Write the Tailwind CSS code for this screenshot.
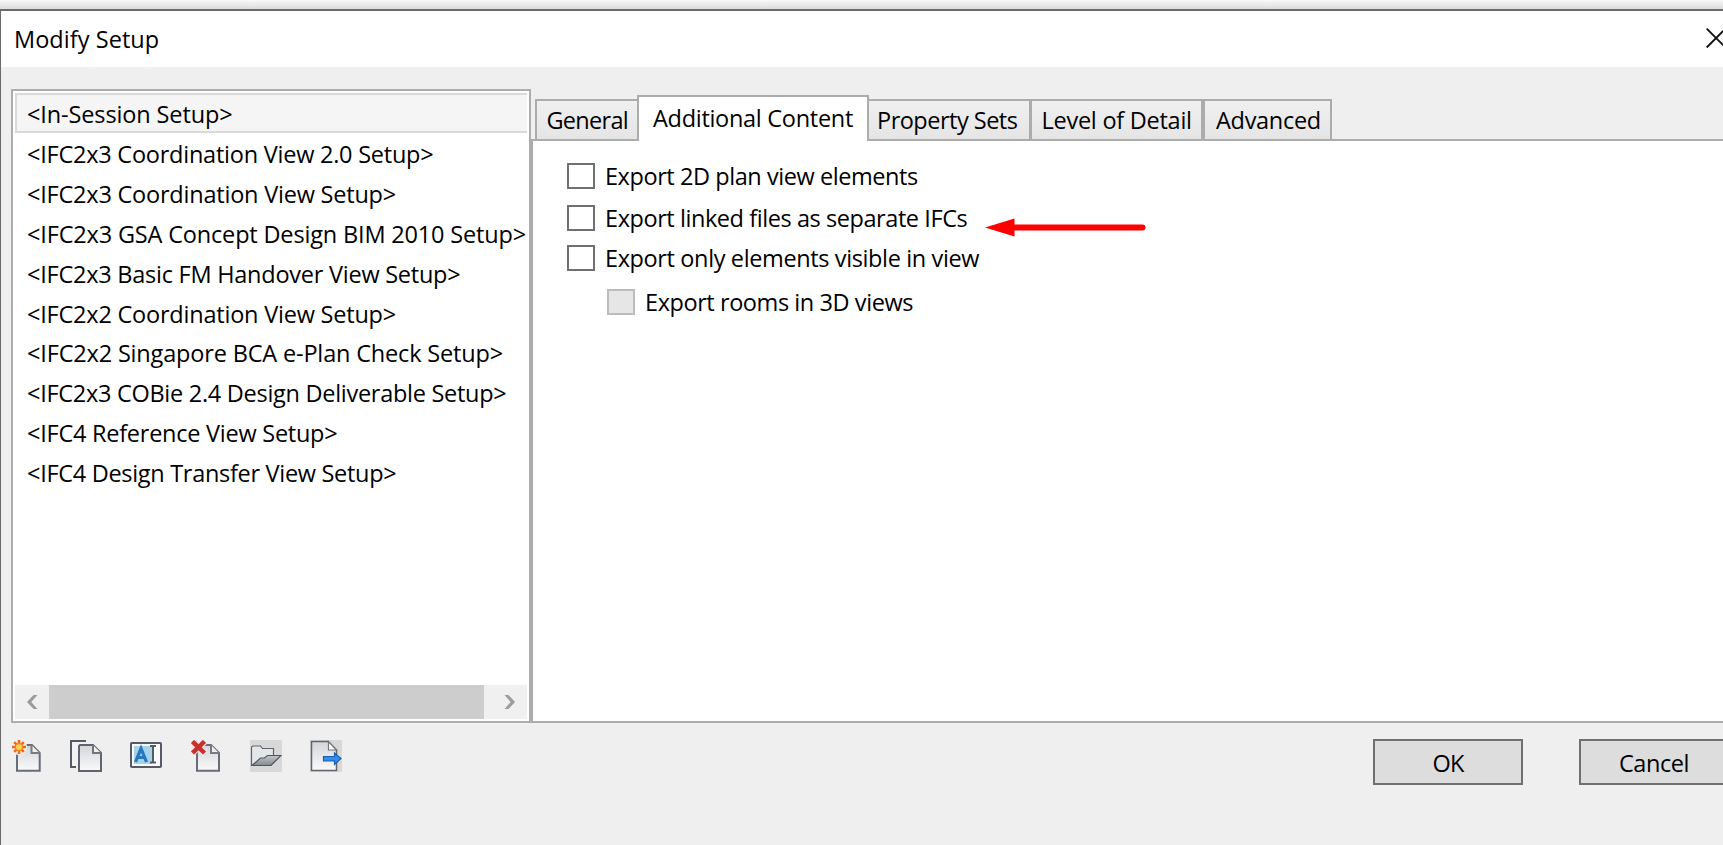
<!DOCTYPE html>
<html lang="en">
<head>
<meta charset="utf-8">
<title>Modify Setup</title>
<script src="https://cdn.jsdelivr.net/npm/@tailwindcss/browser@4"></script>
</head>
<body class="h-[845px] w-[1723px] overflow-hidden bg-[#efefef] font-['Open_Sans','Noto_Sans',sans-serif] text-[23.5px] whitespace-nowrap text-black">
<div class="h-[9px] bg-linear-to-b from-[#f9f9f9] to-[#dcdcdc]"></div>
<div class="flex h-[836px] flex-col border-t-2 border-l border-[#6b6b6b] bg-[#efefef]">
  <!-- title bar -->
  <header class="flex h-14 shrink-0 items-center justify-between overflow-hidden bg-white pl-[13px]">
    <h1 class="pt-0.5 tracking-[0.05px]">Modify Setup</h1>
    <svg class="-mr-1 mb-0.5 h-5 w-[21px] shrink-0" viewBox="0 0 21 20" fill="none" stroke="#111" stroke-width="1.9"><path d="M.7.7 19.5 19.5M19.5.7.7 19.5"/></svg>
  </header>

  <main class="flex h-[656px] shrink-0 pt-[22px] pl-2.5">
    <!-- setup list -->
    <section class="flex h-[634px] w-[520px] shrink-0 flex-col border-2 border-[#abadb3] p-0.5 bg-white">
      <ul class="min-h-0 flex-1 leading-10">
        <li class="flex h-10 items-center border-y-2 border-l-2 border-[#dadada] bg-[#f5f5f5] pt-0.5 pl-2.5 tracking-[-0.12px]">&lt;In-Session Setup&gt;</li>
        <li class="h-10 pt-px pl-3 tracking-[-0.235px]">&lt;IFC2x3 Coordination View 2.0 Setup&gt;</li>
        <li class="h-10 pt-px pl-3 tracking-[-0.212px]">&lt;IFC2x3 Coordination View Setup&gt;</li>
        <li class="h-10 pt-px pl-3 tracking-[-0.166px]">&lt;IFC2x3 GSA Concept Design BIM 2010 Setup&gt;</li>
        <li class="h-10 pt-px pl-3 tracking-[-0.242px]">&lt;IFC2x3 Basic FM Handover View Setup&gt;</li>
        <li class="h-[39px] pt-px pl-3 tracking-[-0.212px]">&lt;IFC2x2 Coordination View Setup&gt;</li>
        <li class="h-10 pt-px pl-3 tracking-[-0.166px]">&lt;IFC2x2 Singapore BCA e-Plan Check Setup&gt;</li>
        <li class="h-10 pt-px pl-3 tracking-[-0.282px]">&lt;IFC2x3 COBie 2.4 Design Deliverable Setup&gt;</li>
        <li class="h-10 pt-px pl-3 tracking-[-0.25px]">&lt;IFC4 Reference View Setup&gt;</li>
        <li class="h-10 pt-px pl-3 tracking-[-0.3px]">&lt;IFC4 Design Transfer View Setup&gt;</li>
      </ul>
      <div class="flex h-[34px] w-[512px] shrink-0 bg-[#f0f0f0]">
        <span class="flex w-[34px] items-center justify-center"><svg class="h-4 w-3" viewBox="0 0 12 16" fill="#9c9c9c"><path d="M7.500 1h4L5.300 8l6.200 7h-4L1 8z"/></svg></span>
        <span class="w-[435px] bg-[#cdcdcd]"></span>
        <span class="flex flex-1 items-center justify-center pl-2"><svg class="h-4 w-3" viewBox="0 0 12 16" fill="#9c9c9c"><path d="M4.500 1h-4l6.200 7-6.200 7h4L11 8z"/></svg></span>
      </div>
    </section>

    <!-- tabs and the open tab's panel -->
    <section class="flex min-w-0 flex-1 flex-col">
      <nav class="z-10 flex h-[52px] shrink-0 items-end pt-[6px] pl-1">
        <div class="mb-[2px] h-10 w-[102px] border-t-2 border-l-2 border-[#acacac] bg-linear-to-b from-[#f0f0f0] to-[#e5e5e5] pl-[9.500px] leading-[39px] tracking-[-0.72px]">General</div>
        <div class="h-[46px] w-[232px] border-x-2 border-t-2 border-[#acacac] bg-white pl-[14px] leading-[43px] tracking-[-0.29px]">Additional Content</div>
        <div class="mb-[2px] h-10 w-[160px] border-t-2 border-[#acacac] bg-linear-to-b from-[#f0f0f0] to-[#e5e5e5] pl-2 leading-[39px] tracking-[-0.507px]">Property Sets</div>
        <div class="mb-[2px] h-10 w-[174px] border-r-2 border-l-[3px] border-t-2 border-[#acacac] bg-linear-to-b from-[#f0f0f0] to-[#e5e5e5] pl-[9.500px] leading-[39px] tracking-[-0.259px]">Level of Detail</div>
        <div class="mb-[2px] h-10 w-[129px] border-x-2 border-t-2 border-[#acacac] bg-linear-to-b from-[#f0f0f0] to-[#e5e5e5] pl-[11px] leading-[39px] tracking-[-0.304px]">Advanced</div>
      </nav>
      <div class="-mt-[2px] flex flex-1 flex-col border-y-2 border-l-2 border-[#acacac] bg-white pt-[22px] pl-[34px]">
        <label class="flex h-[42px] items-start"><i class="h-[26px] w-7 border-2 border-[#707070]"></i><span class="pl-[10px] leading-[26px] tracking-[-0.435px]">Export 2D plan view elements</span></label>
        <div class="flex h-10 items-start">
          <label class="flex items-start"><i class="h-[26px] w-7 border-2 border-[#707070]"></i><span class="w-[390px] pl-[10px] leading-[26px] tracking-[-0.43px]">Export linked files as separate IFCs</span></label>
          <svg class="mt-[13px] h-[19px] w-[162px]" viewBox="0 0 162 19"><path d="M0 9.500 29.500.500v18z" fill="red"/><path d="M29 9.500H157.500" stroke="red" stroke-width="6" stroke-linecap="round"/></svg>
        </div>
        <label class="flex h-11 items-start"><i class="h-[26px] w-7 border-2 border-[#707070]"></i><span class="pl-[10px] leading-[26px] tracking-[-0.375px]">Export only elements visible in view</span></label>
        <label class="flex items-start pl-10"><i class="h-[26px] w-7 border-2 border-[#bcbcbc] bg-[#e6e6e6]"></i><span class="pl-[10px] leading-[27px] tracking-[-0.427px]">Export rooms in 3D views</span></label>
      </div>
    </section>
  </main>

  <footer class="flex h-[122px] shrink-0 items-start justify-between pl-[11px]">
    <div class="flex gap-[28px] pt-[17px]">
      <svg class="h-8 w-8" viewBox="0 0 32 32" fill="none">
        <defs>
          <linearGradient id="paper" x1="0" y1="0" x2="0" y2="1"><stop stop-color="#d3d5da"/><stop offset="1" stop-color="#fafafa"/></linearGradient>
          <linearGradient id="flap" x1="0" y1="0" x2="0" y2="1"><stop stop-color="#c2c7cc"/><stop offset="1" stop-color="#84898f"/></linearGradient>
        </defs>
        <path d="M5 12V30.700H27.700V13L20 5H14" fill="url(#paper)" stroke="#686c75" stroke-width="2"/><path d="M19.500 5v8h8" fill="#eee" stroke="#777b83" stroke-width="2"/>
        <circle cx="7" cy="7" r="8" fill="#f5eeea"/>
        <path d="M7 0v14M0 7h14M2.200 2.200l9.600 9.600M11.800 2.200 2.200 11.800" stroke="#ee6a20" stroke-width="2.600"/><circle cx="7" cy="7" r="3.600" fill="#ffd45a" stroke="#f08a1c" stroke-width="1.500"/>
      </svg>
      <svg class="-ml-[2px] h-8 w-8" viewBox="0 0 32 32" fill="none">
        <path d="M6 27H1V1h15" fill="#f3f3f3" stroke="#565a66" stroke-width="2"/>
        <path d="M9 6 10 5H23l8 8V31H9z" fill="url(#paper)" stroke="#60646e" stroke-width="2"/><path d="M23 5v8h8" fill="#eee" stroke="#70747d" stroke-width="2"/>
      </svg>
      <svg class="h-8 w-8" viewBox="0 0 32 32" fill="none">
        <rect x="1" y="3" width="30" height="24" rx=".8" fill="#fafafa" stroke="#565a66" stroke-width="2"/><path d="M4 6h18v18H4z" fill="#a5d3e8"/>
        <path d="M5.500 22 11 8.500 16.500 22M7.500 17.500h7" stroke="#2878c0" stroke-width="3.200"/><path d="M20 6h6M20 22.500h6M23 6v16.500" stroke="#565a66" stroke-width="2"/>
      </svg>
      <svg class="ml-[1px] h-8 w-8" viewBox="0 0 32 32" fill="none">
        <path d="M6 12V30.700H28V13L20 5H14" fill="url(#paper)" stroke="#686c75" stroke-width="2"/><path d="M20 5v8h8" fill="#eee" stroke="#777b83" stroke-width="2"/>
        <path d="m1 1 13 12M14 1 1 13" stroke="#f2e6e6" stroke-width="7"/><path d="m1.500 1.500 12 11.500M13.500 1.500 1.500 13" stroke="#c9302c" stroke-width="4.500"/>
      </svg>
      <svg class="-ml-[1px] h-8 w-8 bg-[#d8d8d8]" viewBox="0 0 32 32" fill="none">
        <path d="M1.500 25V7L3 6h7.500l2 2.500h11V16" fill="#e4e7e9" stroke="#60656b" stroke-width="1.200"/>
        <path d="m2 25.500 8.500-7.500h4l3-2.500H31L21 25.500z" fill="url(#flap)" stroke="#50555b" stroke-width="1.200"/>
      </svg>
      <svg class="h-8 w-8 bg-[#d8d8d8]" viewBox="0 0 32 32" fill="none">
        <path d="M1.500 1.500H18l8.500 8.500V30.500h-25z" fill="url(#paper)" stroke="#60646b" stroke-width="1.500"/><path d="M18.500 1.500V10h8z" fill="#fff" stroke="#70747b" stroke-width="1.200"/>
        <path d="M13.500 16.500H24.500V13l6.500 5.500-6.500 6V21h-11z" fill="#2f8df0" stroke="#1c5fae" stroke-width="1.200"/>
      </svg>
    </div>
    <div class="-mr-[6px] flex shrink-0 gap-14 pt-4">
      <button class="h-[46px] w-[150px] border-2 border-[#707070] bg-[#ddd] pt-[3px] tracking-[-0.9px]">OK</button>
      <button class="h-[46px] w-[150px] border-2 border-[#707070] bg-[#ddd] pt-[3px] tracking-[-0.428px]">Cancel</button>
    </div>
  </footer>
</div>
</body>
</html>
